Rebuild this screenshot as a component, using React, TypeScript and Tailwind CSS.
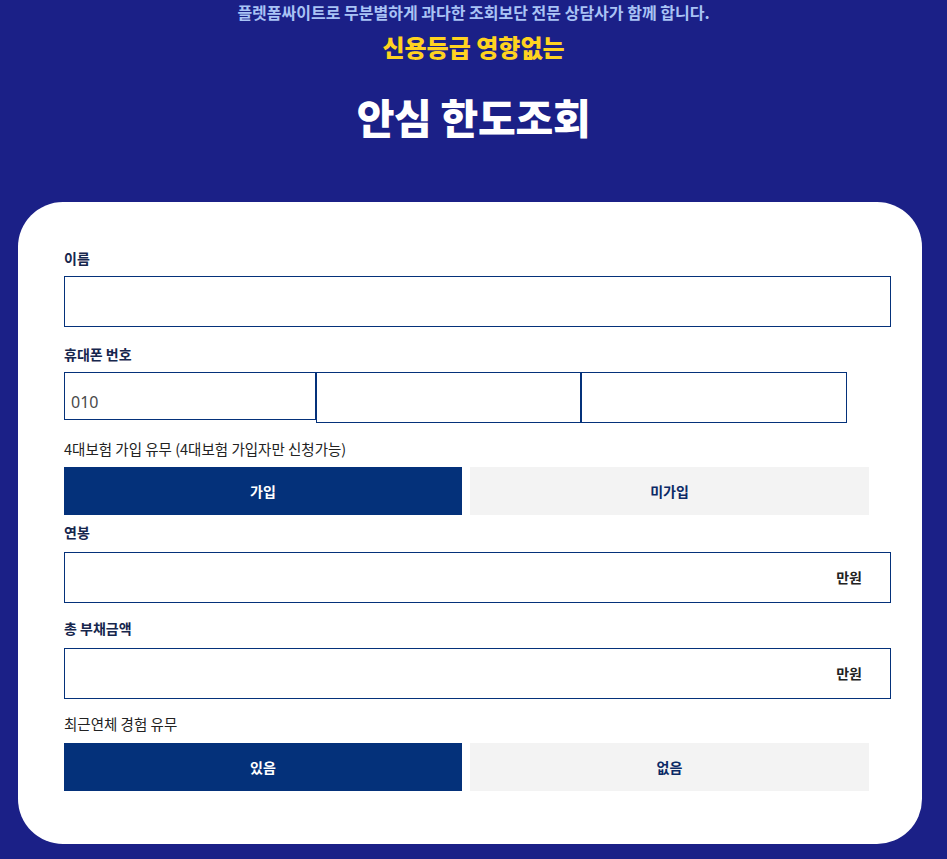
import React from "react";

const KR = { fontFamily: '"Noto Sans CJK KR", "Noto Sans", sans-serif' };

function Label({ children, bold = true, className = "" }: { children: React.ReactNode; bold?: boolean; className?: string }) {
  return (
    <div className={`leading-[20px] ${bold ? "text-[14px] font-bold text-[#16264d]" : "text-[14.5px] font-normal text-[#222]"} ${className}`}>
      {children}
    </div>
  );
}

function Toggle({ left, right }: { left: string; right: string }) {
  return (
    <div className="flex gap-[8px]">
      <div className="w-[398px] h-[48px] bg-[#04317a] text-white text-[14px] font-bold flex items-center justify-center">{left}</div>
      <div className="w-[399px] h-[48px] bg-[#f3f3f3] text-[#0b2a66] text-[14px] font-bold flex items-center justify-center">{right}</div>
    </div>
  );
}

function Money() {
  return (
    <div className="h-[51px] w-[827px] border border-[#04317a] flex items-center justify-end pr-[28px]">
      <span className="text-[14px] font-bold text-[#222]">만원</span>
    </div>
  );
}

export default function App() {
  return (
    <div className="min-h-[859px] bg-[#1b2087] pb-[15px]" style={KR}>
      <div className="flex flex-col items-center">
        <div className="text-[16px] leading-[24px] font-bold text-[#a9c3f5]">
          플렛폼싸이트로 무분별하게 과다한 조회보단 전문 상담사가 함께 합니다.
        </div>
        <div className="mt-[7px] text-[24px] leading-[32px] font-black text-[#ffd320]">신용등급 영향없는</div>
        <div className="mt-[29px] text-[41px] leading-[48px] font-black text-white tracking-[-0.3px]">안심 한도조회</div>
      </div>
      <div className="mt-[62px] ml-[18px] w-[904px] bg-white rounded-[45px] pl-[46px] pt-[46px] pb-[53px]">
        <Label>이름</Label>
        <div className="mt-[8px] h-[51px] w-[827px] border border-[#04317a]" />
        <Label className="mt-[17px]">휴대폰 번호</Label>
        <div className="mt-[8px] flex items-start">
          <div className="w-[252px] h-[48px] border border-[#04317a] flex items-end pl-[6px] pb-[5px]">
            <span className="text-[16px] text-[#4a4a4a]" style={{ fontFamily: '"Noto Sans", sans-serif' }}>010</span>
          </div>
          <div className="w-[265px] h-[51px] border border-[#04317a]" />
          <div className="w-[266px] h-[51px] border border-[#04317a]" />
        </div>
        <Label bold={false} className="mt-[16px]">4대보험 가입 유무 (4대보험 가입자만 신청가능)</Label>
        <div className="mt-[8px]">
          <Toggle left="가입" right="미가입" />
        </div>
        <Label className="mt-[7px]">연봉</Label>
        <div className="mt-[10px]">
          <Money />
        </div>
        <Label className="mt-[15px]">총 부채금액</Label>
        <div className="mt-[10px]">
          <Money />
        </div>
        <Label bold={false} className="mt-[15px]">최근연체 경험 유무</Label>
        <div className="mt-[9px]">
          <Toggle left="있음" right="없음" />
        </div>
      </div>
    </div>
  );
}
